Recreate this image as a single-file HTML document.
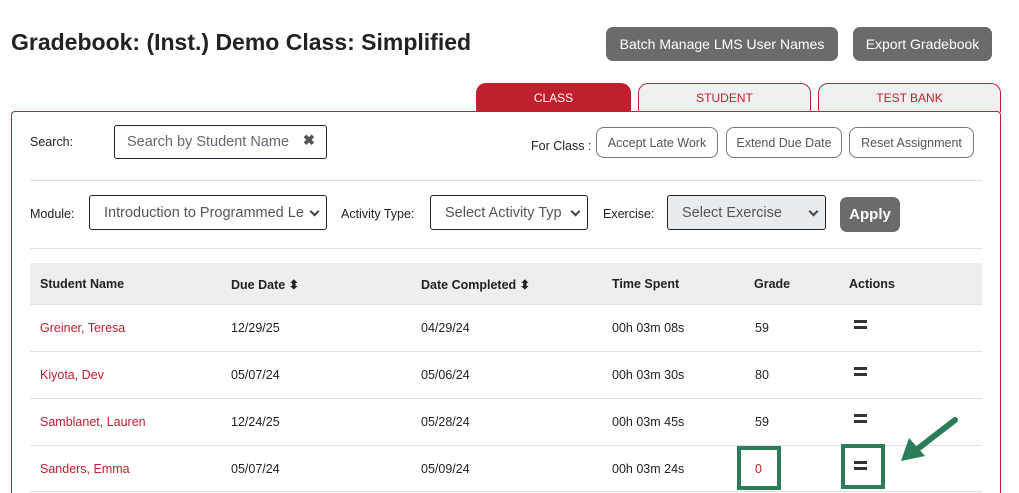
<!DOCTYPE html><html><head><style>
*{box-sizing:border-box}html,body{margin:0;width:1019px;height:493px;overflow:hidden}body{background:#fff;font-family:"Liberation Sans",sans-serif;color:#222;position:relative}
.a{position:absolute}
h1{position:absolute;left:11px;top:29px;margin:0;font-size:23px;font-weight:bold;color:#222}
.btn{position:absolute;background:#6b6b6b;color:#fff;border-radius:7px;font-size:14px;display:flex;align-items:center;justify-content:center}
.tab{position:absolute;top:83px;height:29px;border:1px solid #c0202e;border-bottom:none;border-radius:10px 10px 0 0;background:#f0f0f0;color:#c0202e;font-size:12px;display:flex;align-items:center;justify-content:center}
.panel{position:absolute;left:11px;top:111px;width:990px;height:382px;border:1px solid #c0202e;border-bottom:none;border-radius:4px 4px 0 0}
.ob{position:absolute;top:127px;height:31px;border:1px solid #777;border-radius:8px;font-size:12.5px;color:#555;display:flex;align-items:center;justify-content:center}
.sel{position:absolute;top:195px;height:35px;border:1px solid #222;border-radius:3px;font-size:14.5px;color:#555;padding-left:14px;display:flex;align-items:center;overflow:hidden;white-space:nowrap}
.sel:after{content:"";position:absolute;right:8px;top:12px;width:5px;height:5px;border-right:2px solid #444;border-bottom:2px solid #444;transform:rotate(45deg)}
.lbl{position:absolute;font-size:12.5px;color:#222}
.hr{position:absolute;left:30px;width:952px;height:1px;background:#dde0e4}
.td{position:absolute;font-size:12.5px}
.eq{position:absolute;width:13px;height:9px;border-top:3px solid #333;border-bottom:3px solid #333}
</style></head><body>
<h1>Gradebook: (Inst.) Demo Class: Simplified</h1>
<div class="btn" style="left:606px;top:27px;width:232px;height:34px">Batch Manage LMS User Names</div>
<div class="btn" style="left:853px;top:27px;width:139px;height:34px">Export Gradebook</div>
<div class="tab" style="left:476px;width:155px;background:#c0202e;color:#fff">CLASS</div>
<div class="tab" style="left:638px;width:173px">STUDENT</div>
<div class="tab" style="left:818px;width:183px">TEST BANK</div>
<div class="panel"></div>
<div class="lbl" style="left:30px;top:135px">Search:</div>
<div class="a" style="left:114px;top:125px;width:213px;height:34px;border:1px solid #222;border-radius:3px;font-size:14.5px;color:#667;padding:8px 0 0 12px">Search by Student Name<span style="position:absolute;right:11px;top:7px;color:#555;font-weight:bold">✖</span></div>
<div class="lbl" style="left:531px;top:139px">For Class :</div>
<div class="ob" style="left:596px;width:122px">Accept Late Work</div>
<div class="ob" style="left:726px;width:116px">Extend Due Date</div>
<div class="ob" style="left:849px;width:125px">Reset Assignment</div>
<div class="hr" style="top:180px"></div>
<div class="lbl" style="left:30px;top:207px">Module:</div>
<div class="sel" style="left:89px;width:238px">Introduction to Programmed Le</div>
<div class="lbl" style="left:341px;top:207px">Activity Type:</div>
<div class="sel" style="left:430px;width:158px">Select Activity Typ</div>
<div class="lbl" style="left:603px;top:207px">Exercise:</div>
<div class="sel" style="left:667px;width:159px;background:#e8ecef">Select Exercise</div>
<div class="btn" style="left:840px;top:197px;width:60px;height:35px;font-weight:bold;font-size:15px">Apply</div>
<div class="hr" style="top:248px"></div>
<div class="a" style="left:30px;top:263px;width:952px;height:41px;background:#eceef0"></div>
<div class="td" style="left:40px;top:277px;font-weight:bold">Student Name</div>
<div class="td" style="left:231px;top:277px;font-weight:bold">Due Date ⬍</div>
<div class="td" style="left:421px;top:277px;font-weight:bold">Date Completed ⬍</div>
<div class="td" style="left:612px;top:277px;font-weight:bold">Time Spent</div>
<div class="td" style="left:754px;top:277px;font-weight:bold">Grade</div>
<div class="td" style="left:849px;top:277px;font-weight:bold">Actions</div>
<div class="hr" style="top:304px"></div>
<div class="td" style="left:40px;top:321px;color:#c0202e">Greiner, Teresa</div><div class="td" style="left:231px;top:321px">12/29/25</div><div class="td" style="left:421px;top:321px">04/29/24</div><div class="td" style="left:612px;top:321px">00h 03m 08s</div><div class="td" style="left:755px;top:321px">59</div><div class="eq" style="left:854px;top:320px"></div>
<div class="hr" style="top:351px"></div>
<div class="td" style="left:40px;top:368px;color:#c0202e">Kiyota, Dev</div><div class="td" style="left:231px;top:368px">05/07/24</div><div class="td" style="left:421px;top:368px">05/06/24</div><div class="td" style="left:612px;top:368px">00h 03m 30s</div><div class="td" style="left:755px;top:368px">80</div><div class="eq" style="left:854px;top:367px"></div>
<div class="hr" style="top:398px"></div>
<div class="td" style="left:40px;top:415px;color:#c0202e">Samblanet, Lauren</div><div class="td" style="left:231px;top:415px">12/24/25</div><div class="td" style="left:421px;top:415px">05/28/24</div><div class="td" style="left:612px;top:415px">00h 03m 45s</div><div class="td" style="left:755px;top:415px">59</div><div class="eq" style="left:854px;top:414px"></div>
<div class="hr" style="top:445px"></div>
<div class="td" style="left:40px;top:462px;color:#c0202e">Sanders, Emma</div><div class="td" style="left:231px;top:462px">05/07/24</div><div class="td" style="left:421px;top:462px">05/09/24</div><div class="td" style="left:612px;top:462px">00h 03m 24s</div><div class="td" style="left:755px;top:462px;color:#c0202e">0</div><div class="eq" style="left:854px;top:461px"></div>
<div class="hr" style="top:491px"></div>
<div class="a" style="left:737px;top:446px;width:44px;height:44px;border:4px solid #2a7d57"></div>
<div class="a" style="left:841px;top:444px;width:44px;height:45px;border:4px solid #2a7d57"></div>
<svg class="a" style="left:895px;top:412px" width="70" height="55"><line x1="60" y1="8" x2="16" y2="42" stroke="#2a7d57" stroke-width="6" stroke-linecap="round"/><polygon points="6,49 14,26 30,44" fill="#2a7d57"/></svg>
</body></html>
